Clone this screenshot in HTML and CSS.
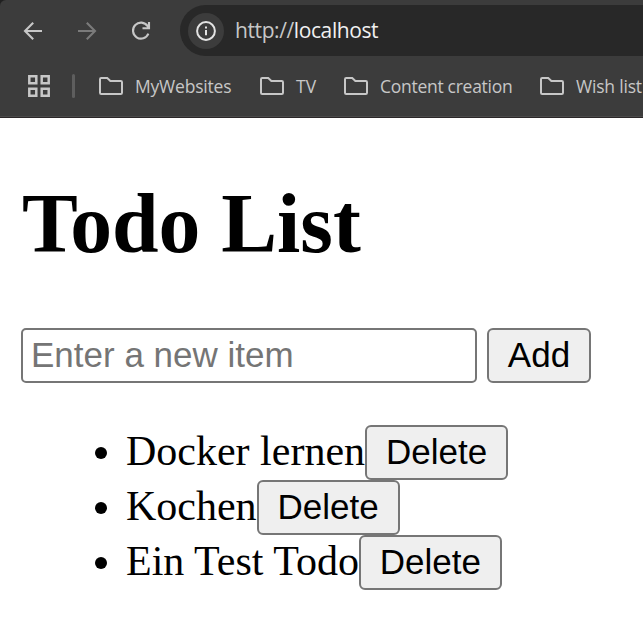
FILE: index.html
```html
<!DOCTYPE html>
<html lang="en">
<head>
<meta charset="utf-8">
<title>Todo List</title>
<link rel="stylesheet" href="styles.css">
</head>
<body>
<svg class="defs" width="0" height="0">
  <symbol id="folder" viewBox="0 0 24 18"><path d="M2.2 1H8.2L11.4 4H21.8Q23 4 23 5.2V15.8Q23 17 21.8 17H2.2Q1 17 1 15.8V2.2Q1 1 2.2 1Z" fill="none" stroke="currentColor" stroke-width="2"/></symbol>
</svg>
<header class="browser">
  <nav class="toolbar">
    <svg class="tool" viewBox="0 0 20 20"><path d="M19 10H2M10.2 1.7 2 10l8.2 8.3"/></svg>
    <svg class="tool disabled" viewBox="0 0 20 20"><path d="M1 10H18M9.8 1.7 18 10l-8.2 8.3"/></svg>
    <svg class="tool" viewBox="0 0 20 20"><path d="M17.4 12.7A8 8 0 1 1 16.6 5.1L18 7M18 1V7.2H11.5"/></svg>
    <div class="address">
      <span class="site-info"><svg viewBox="0 0 20 20"><circle cx="10" cy="10" r="8.9"/><path d="M10 9v5.2M10 5.4v2"/></svg></span>
      <span class="url">http://<b>localhost</b></span>
    </div>
  </nav>
  <nav class="bookmarks">
    <svg class="apps" viewBox="0 0 22 22"><path d="M1.3 1.3h7v7h-7zM13.7 1.3h7v7h-7zM1.3 13.7h7v7h-7zM13.7 13.7h7v7h-7z"/></svg>
    <span class="divider"></span>
    <span class="bookmark sites"><svg><use href="#folder"/></svg><span>MyWebsites</span></span>
    <span class="bookmark tv"><svg><use href="#folder"/></svg><span>TV</span></span>
    <span class="bookmark content"><svg><use href="#folder"/></svg><span>Content creation</span></span>
    <span class="bookmark wish"><svg><use href="#folder"/></svg><span>Wish list</span></span>
  </nav>
</header>
<main>
  <h1>Todo List</h1>
  <form class="entry">
    <input type="text" placeholder="Enter a new item">
    <button class="add" type="button">Add</button>
  </form>
  <ul>
    <li>Docker lernen<button type="button">Delete</button></li>
    <li>Kochen<button type="button">Delete</button></li>
    <li>Ein Test Todo<button type="button">Delete</button></li>
  </ul>
</main>
</body>
</html>
```
FILE: styles.css
```css
* { box-sizing: border-box; }
html { background: linear-gradient(#202020 10px, #fff 10px); }
body {
  margin: 0;
  color: #000;
  font-family: "Liberation Serif", serif;
  overflow: hidden;
}
.defs { display: block; }
.browser {
  height: 118px;
  background: #3c3c3c;
  border-bottom: 1px solid #2b2728;
  box-shadow: inset 0 -1px #4a4a4a;
  border-top-left-radius: 6px;
  font-family: "Open Sans", sans-serif;
  color: #c7c7c7;
  overflow: hidden;
}
.toolbar {
  display: flex;
  align-items: center;
  height: 61px;
  padding-left: 23px;
}
.tool {
  width: 20px;
  height: 20px;
  margin-right: 34px;
  flex: none;
  fill: none;
  stroke: #c7c7c7;
  stroke-width: 2.1;
}
.tool.disabled { stroke: #7b7b7b; }
.address {
  display: flex;
  align-items: center;
  flex: none;
  width: 520px;
  height: 51px;
  margin-left: -5px;
  padding-left: 8px;
  border-radius: 26px;
  background: #282828;
}
.site-info {
  display: grid;
  place-items: center;
  width: 36px;
  height: 36px;
  border-radius: 50%;
  background: #3c3c3c;
}
.site-info svg {
  width: 20px;
  height: 20px;
  fill: none;
  stroke: #e3e3e3;
  stroke-width: 2;
}
.url {
  margin-left: 11px;
  padding-bottom: 2px;
  font-size: 21px;
  letter-spacing: -0.4px;
  line-height: 28px;
}
.url b { font-weight: 400; color: #f0f0f0; }
.bookmarks {
  display: flex;
  align-items: center;
  height: 50px;
  padding-left: 28px;
}
.apps {
  width: 22px;
  height: 22px;
  flex: none;
  fill: none;
  stroke: #c7c7c7;
  stroke-width: 2.5;
}
.divider {
  width: 3px;
  height: 24px;
  margin: 0 24px 0 22px;
  border-radius: 2px;
  background: #5e5e5e;
  flex: none;
}
.bookmark {
  display: flex;
  align-items: center;
  flex: none;
  font-size: 17.5px;
  white-space: nowrap;
}
.bookmark span { padding-bottom: 1px; }
.bookmark svg {
  width: 24px;
  height: 18px;
  margin-right: 12px;
}
.sites { width: 161px; letter-spacing: -0.2px; }
.tv { width: 84px; }
.content { width: 196px; letter-spacing: -0.28px; }
.wish { letter-spacing: -0.2px; }
main { height: 510px; padding: 58px 21px 0; background: #fff; }
h1 {
  margin: 0;
  padding-left: 1px;
  font-size: 83.7px;
  line-height: 96px;
}
.entry {
  display: flex;
  gap: 10px;
  margin: 56px 0 0;
}
input, button {
  height: 55px;
  border: 2px solid #767676;
  font: 35px "Liberation Sans", sans-serif;
}
input {
  width: 456px;
  padding: 0 8px 2px;
  border-radius: 5px;
  background: #fff;
}
input::placeholder { color: #757575; opacity: 1; }
button {
  width: 143px;
  padding: 0;
  border-radius: 6px;
  background: #efefef;
  color: #000;
}
.add { width: 104px; padding-bottom: 2px; }
ul {
  margin: 41px 0 0;
  padding-left: 105px;
  font-size: 42px;
}
li { height: 55px; line-height: 55px; }
li button { vertical-align: 1px; }
```
